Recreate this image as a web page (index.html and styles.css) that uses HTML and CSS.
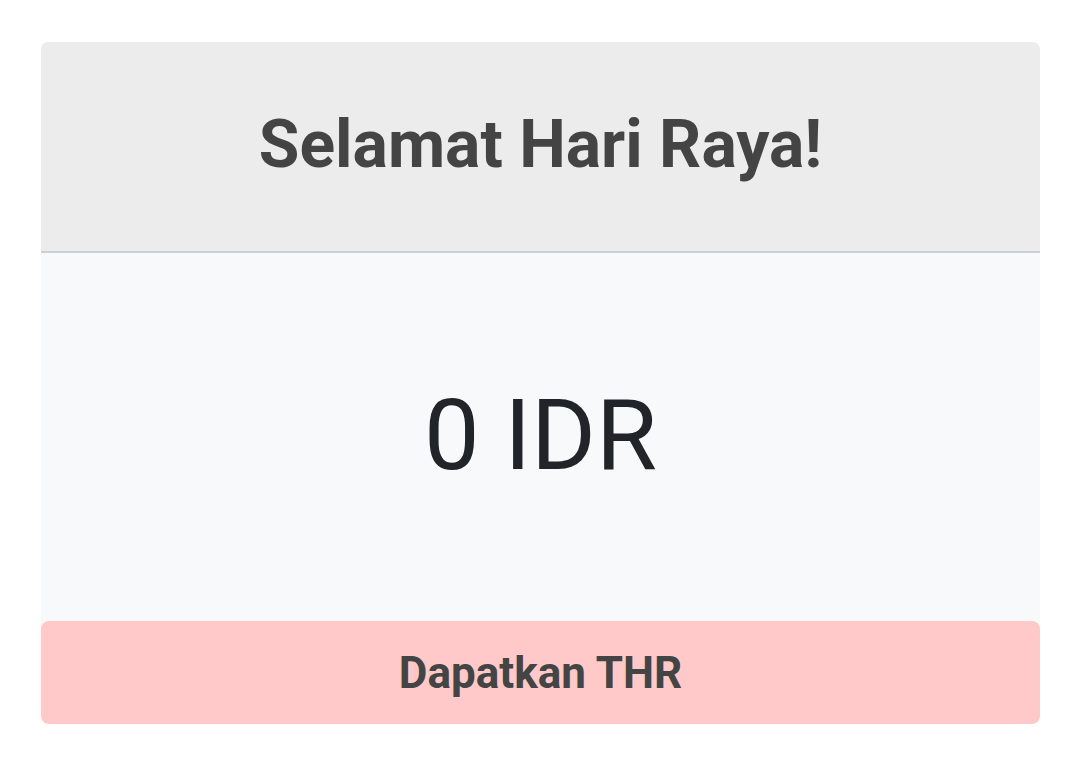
FILE: index.html
```html
<!DOCTYPE html>
<html lang="id">
<head>
<meta charset="utf-8">
<title>THR</title>
<link rel="stylesheet" href="styles.css">
</head>
<body>
<main class="page">
  <section class="card">
    <header class="card-header">
      <h1 class="title">Selamat Hari Raya!</h1>
    </header>
    <div class="card-body">
      <p class="amount">0 IDR</p>
    </div>
    <button class="cta" type="button">Dapatkan THR</button>
  </section>
</main>
</body>
</html>
```

FILE: styles.css
```css
html, body {
  margin: 0;
  padding: 0;
  background: #ffffff;
}

body {
  font-family: Roboto, "Liberation Sans", Arial, sans-serif;
}

.page {
  padding: 42px 40px 0 41px;
}

.card {
  display: flex;
  flex-direction: column;
}

.card-header {
  height: 209px;
  background: #ececec;
  border-bottom: 2px solid #cfcfcf;
  border-radius: 7px 7px 0 0;
  display: flex;
  align-items: center;
  justify-content: center;
}

.title {
  margin: 0;
  font-size: 66px;
  font-weight: 700;
  color: #444444;
  line-height: 1;
  padding-bottom: 3px;
}

.card-body {
  height: 376px;
  padding-bottom: 12px;
  box-sizing: border-box;
  background: #f8f9fa;
  display: flex;
  align-items: center;
  justify-content: center;
}

.amount {
  margin: 0;
  font-size: 99px;
  font-weight: 400;
  color: #212529;
  line-height: 1;
}

.cta {
  height: 103px;
  border: none;
  border-radius: 8px;
  background: #ffc9c9;
  color: #444444;
  font-family: Roboto, "Liberation Sans", Arial, sans-serif;
  font-size: 44px;
  font-weight: 700;
  padding: 0;
  margin: 0;
  margin-top: -8px;
  position: relative;
}
```
